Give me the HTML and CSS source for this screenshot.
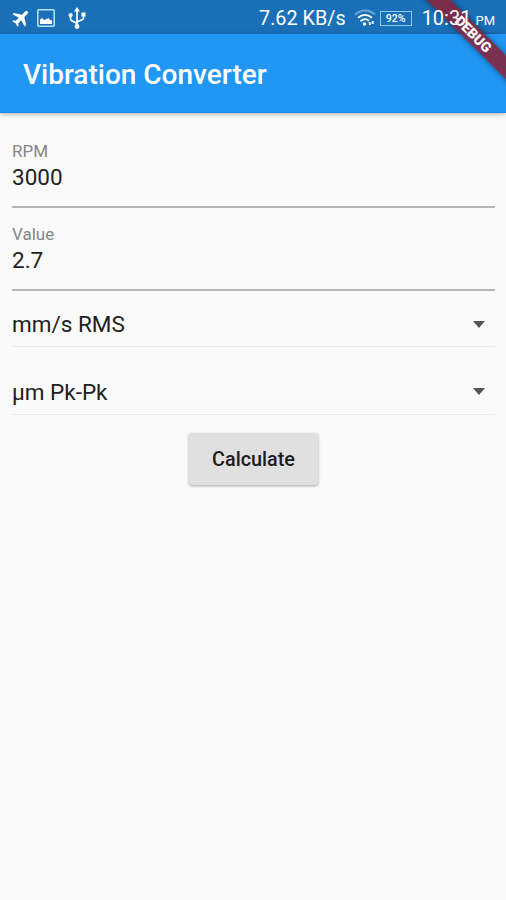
FILE: index.html
```html
<!DOCTYPE html>
<html lang="en">
<head>
<meta charset="utf-8">
<title>Vibration Converter</title>
<link rel="stylesheet" href="styles.css">
</head>
<body>
<div class="status">
  <svg class="plane" width="18" height="18" viewBox="0 0 18 18"><path transform="rotate(45 9 9)" fill="currentColor" d="M17.600 12.400v-2L10.700 6V1.400a1.700 1.700 0 0 0-3.400 0V6L.4 10.400v2l6.900-1.900v4.100l-2 1.400v1.600L9 16.600l3.700 1V16l-2-1.400v-4.100z"/></svg>
  <svg class="photo" width="18" height="18" viewBox="0 0 18 18"><rect x=".8" y=".8" width="16.400" height="16.400" rx="1" fill="none" stroke="#b9e4f5" stroke-width="1.500"/><path fill="#fff" d="M3 15v-4.500l2-1.500 2 2 1.500-.5L11.500 9 13 11l2 .5V15z"/></svg>
  <svg class="usb" width="18" height="22" viewBox="0 0 18 22" fill="none" stroke="currentColor" stroke-width="1.700"><path d="M9 3v16M2.500 9v3q0 1 1 1.500L9 16.500M15.500 8v3q0 1-1 1.500L9 15"/><path fill="currentColor" stroke="none" d="M9 0l3 4.500H6zM13.500 5.500h4v4h-4z"/><circle cx="2.600" cy="8" r="2.100" fill="currentColor" stroke="none"/><circle cx="9" cy="19.500" r="2.400" fill="currentColor" stroke="none"/></svg>
  <span class="speed">7.62 KB/s</span>
  <svg class="wifi" width="22" height="18" viewBox="0 0 22 18" fill="none" stroke="#fff"><path stroke="#69a5d5" stroke-width="1.700" d="M1 5.500Q11-2.500 21 5.500"/><path stroke-width="1.800" d="M4 8.700Q11 3 18 8.700M6.500 12.200q4.500-3.800 8.500-.5"/><circle cx="10.500" cy="15" r="1.700" fill="#fff" stroke="none"/><path stroke-width="1.800" d="M15.800 13v3M18.700 12v3"/></svg>
  <span class="battery">92%</span>
  <span class="clock">10:31</span><span class="pm">PM</span>
</div>
<header class="appbar"><h1>Vibration Converter</h1></header>
<main>
  <div class="field"><label>RPM</label><div class="value">3000</div></div>
  <div class="field"><label>Value</label><div class="value">2.7</div></div>
  <div class="select first"><span>mm/s RMS</span><i class="arrow"></i></div>
  <div class="select second"><span>µm Pk-Pk</span><i class="arrow"></i></div>
  <button class="calc">Calculate</button>
</main>
<div class="corner"><div class="banner">DEBUG</div></div>
</body>
</html>
```
FILE: styles.css
```css
* { box-sizing: border-box; }
body { margin: 0; width: 506px; height: 900px; overflow: hidden; position: relative; background: #fafafa; color: #212121; font-family: Roboto, "Liberation Sans", sans-serif; }
.status { height: 34px; background: #1a70b8; color: #fff; display: flex; align-items: center; padding: 2px 11px 0 12px; white-space: nowrap; }
.status svg { flex: none; }
.photo { margin-left: 7px; }
.usb { margin-left: 13px; }
.speed { margin-left: auto; font-size: 19.800px; }
.wifi { margin-left: 8px; }
.battery { flex: none; width: 32px; height: 15px; margin-left: 4px; border: 1.500px solid #8fcaeb; font-size: 10.500px; font-weight: 500; line-height: 13px; text-align: center; }
.clock { margin-left: 10px; font-size: 20px; }
.clock, .pm { position: relative; z-index: 2; }
.pm { margin-left: 4px; font-size: 13px; padding-top: 4px; }
.appbar { height: 79px; background: #2196f3; display: flex; align-items: center; padding-left: 23px; border-bottom: 1px solid #1c88df; box-shadow: 0 1px 5px rgba(0,0,0,.3); }
h1 { margin: 4px 0 0; color: #fff; font-size: 28px; line-height: 32px; font-weight: 500; }
main { display: flex; flex-direction: column; padding: 12px 11px 0 12px; }
.field { height: 83px; border-bottom: 2px solid #b5b5b5; padding-top: 16px; }
label { display: block; font-size: 17px; line-height: 20px; color: #858585; }
.value { font-size: 22.500px; line-height: 28px; margin-top: 2px; }
.select { display: flex; align-items: center; justify-content: space-between; border-bottom: 1.500px solid #ebebeb; font-size: 22.500px; padding-right: 10px; }
.first { height: 56px; padding-top: 11px; }
.second { height: 68px; padding-top: 22px; }
.arrow { border: 6.500px solid transparent; border-top: 7px solid #555; border-bottom: 0; }
.calc { align-self: center; width: 129px; height: 52px; margin-top: 18px; padding: 0; border: 0; border-radius: 3px; background: #e0e0e0; box-shadow: 0 1px 3px rgba(0,0,0,.35); font: 500 19.800px Roboto, "Liberation Sans", sans-serif; color: #1d1d1d; }
.corner { position: absolute; z-index: 1; top: 0; right: 0; width: 90px; height: 90px; overflow: hidden; }
.banner { position: absolute; left: -18px; top: 26px; width: 150px; height: 17px; transform: rotate(45deg); background: rgba(134,35,58,.88); box-shadow: 0 0 6px rgba(0,0,0,.45); color: #fff; font-size: 14px; line-height: 17px; font-weight: 900; text-align: center; }
```
